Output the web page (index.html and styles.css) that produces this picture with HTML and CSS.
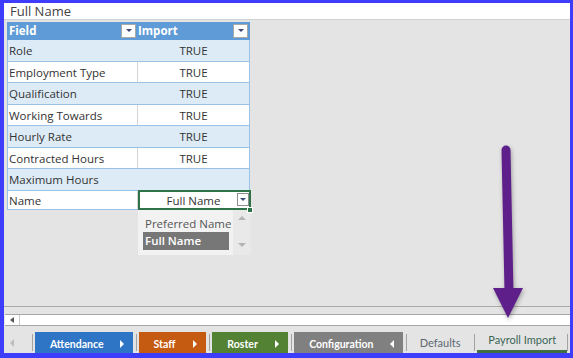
FILE: index.html
```html
<!DOCTYPE html>
<html lang="en">
<head>
    <meta charset="UTF-8">
    <title>Payroll Import</title>
    <link rel="stylesheet" href="styles.css">
</head>
<body>

<div class="window">
    <div class="formula-bar">Full Name</div>

    <div class="sheet">
        <div class="table-wrap">
            <div class="row head">
                <div class="cell">Field<span class="filter-btn"></span></div>
                <div class="cell">Import<span class="filter-btn"></span></div>
            </div>
            <div class="row band">
                <div class="cell">Role</div>
                <div class="cell value">TRUE</div>
            </div>
            <div class="row plain">
                <div class="cell">Employment Type</div>
                <div class="cell value">TRUE</div>
            </div>
            <div class="row band">
                <div class="cell">Qualification</div>
                <div class="cell value">TRUE</div>
            </div>
            <div class="row plain">
                <div class="cell">Working Towards</div>
                <div class="cell value">TRUE</div>
            </div>
            <div class="row band">
                <div class="cell">Hourly Rate</div>
                <div class="cell value">TRUE</div>
            </div>
            <div class="row plain">
                <div class="cell">Contracted Hours</div>
                <div class="cell value">TRUE</div>
            </div>
            <div class="row band">
                <div class="cell">Maximum Hours</div>
                <div class="cell value"></div>
            </div>
            <div class="row plain last">
                <div class="cell">Name</div>
                <div class="cell value selected">Full Name<span class="cell-btn"></span></div>
            </div>

            <div class="dd-list">
                <div class="dd-items">
                    <div class="dd-item">Preferred Name</div>
                    <div class="dd-item active">Full Name</div>
                </div>
                <div class="dd-scroll">
                    <span class="tri-up"></span>
                    <span class="tri-down"></span>
                </div>
            </div>
        </div>
    </div>

    <div class="hscroll">
        <div class="scroll-bar">
            <span class="scroll-btn"><span class="tri-left dark"></span></span>
        </div>
    </div>

    <div class="tabbar">
        <div class="tab-nav"><span class="tri-left light"></span></div>
        <span class="sep first"></span>
        <div class="tab tab-attendance">Attendance<span class="tri-right"></span></div>
        <span class="sep"></span>
        <div class="tab tab-staff">Staff<span class="tri-right"></span></div>
        <span class="sep"></span>
        <div class="tab tab-roster">Roster<span class="tri-right"></span></div>
        <span class="sep"></span>
        <div class="tab tab-config">Configuration<span class="tri-left white"></span></div>
        <span class="sep"></span>
        <div class="tab tab-plain">Defaults</div>
        <span class="sep"></span>
        <div class="tab tab-active">Payroll Import</div>
        <span class="sep first"></span>
    </div>

    <svg class="callout" width="573" height="358" viewBox="0 0 573 358">
        <line x1="506" y1="150" x2="509" y2="292" stroke="#5f1f8b" stroke-width="9" stroke-linecap="round"/>
        <polygon points="493,288 523,288 508,318" fill="#5f1f8b"/>
    </svg>
</div>

</body>
</html>
```

FILE: styles.css
```css
body {
    margin: 0;
    font-family: "Open Sans", sans-serif;
}
.window {
    position: relative;
    width: 573px;
    height: 358px;
    box-sizing: border-box;
    border: solid #3d3dfb;
    border-width: 3px 3px 5px 4px;
    display: flex;
    flex-direction: column;
    background: #e4e4e4;
    overflow: hidden;
}
.formula-bar {
    flex: none;
    height: 16px;
    line-height: 16px;
    padding-left: 6px;
    background: #fff;
    border-bottom: 1px solid #d2d2d2;
    font-size: 13px;
    color: #444;
}
.sheet {
    flex: 1;
    padding: 2px 0 0 3px;
    border-bottom: 1px solid #a9a9a9;
}
.table-wrap {
    position: relative;
    width: 243px;
}
.row {
    display: grid;
    grid-template-columns: 129px 112px;
    box-sizing: border-box;
    border: solid #9bc2e6;
    border-width: 0 1px 1px 1px;
    background: #fff;
}
.row.band {
    height: 22px;
    background: #ddebf7;
}
.row.plain {
    height: 21px;
}
.row.last {
    height: 19px;
}
.row.head {
    height: 18px;
    background: #5f9bd6;
    border-color: #5f9bd6;
    color: #fff;
    font-weight: bold;
}
.cell {
    display: flex;
    align-items: center;
    padding-left: 1px;
    font-size: 11.5px;
    color: #333;
    white-space: nowrap;
}
.head .cell {
    justify-content: space-between;
    padding-right: 1px;
    color: #fff;
}
.cell.value {
    justify-content: center;
    border-left: 1px solid transparent;
    padding-left: 0;
}
.plain .cell.value {
    border-left-color: #d6d6d6;
}
.filter-btn, .cell-btn {
    display: flex;
    align-items: center;
    justify-content: center;
    box-sizing: border-box;
    background: #fff;
    border: 1px solid #a8a8a8;
}
.filter-btn {
    width: 15px;
    height: 14px;
}
.filter-btn::after, .cell-btn::after {
    content: "";
    border-top: 3px solid #3b4a7a;
    border-left: 3px solid transparent;
    border-right: 3px solid transparent;
}
.cell.selected {
    position: relative;
}
.cell.selected::after {
    content: "";
    position: absolute;
    top: -1px;
    right: -2px;
    bottom: -1px;
    left: 0;
    border: 2px solid #2f7448;
}
.cell.selected::before {
    content: "";
    position: absolute;
    right: -4px;
    bottom: -4px;
    width: 4px;
    height: 4px;
    background: #2f7448;
    border: 1px solid #fff;
    z-index: 2;
}
.cell-btn {
    position: absolute;
    right: 0;
    top: 2px;
    width: 12px;
    height: 13px;
    border-color: #8e8e8e;
    z-index: 1;
}
.dd-list {
    position: absolute;
    left: 131px;
    top: 188px;
    width: 113px;
    height: 45px;
    display: flex;
    background: #f2f2f2;
}
.dd-items {
    width: 86px;
    padding: 6px 4px 0 5px;
}
.dd-item {
    height: 16px;
    line-height: 16px;
    padding-left: 2px;
    font-size: 11.5px;
    color: #555;
    white-space: nowrap;
}
.dd-item.active {
    height: 18px;
    line-height: 18px;
    background: #777;
    color: #fff;
    font-weight: 600;
}
.dd-scroll {
    flex: 1;
    display: flex;
    flex-direction: column;
    align-items: center;
    justify-content: space-between;
    padding: 6px 0 8px;
    background: #e9e9e9;
}
.tri-up {
    border-bottom: 4px solid #b4b4b4;
    border-left: 4px solid transparent;
    border-right: 4px solid transparent;
}
.tri-down {
    border-top: 4px solid #b4b4b4;
    border-left: 4px solid transparent;
    border-right: 4px solid transparent;
}
.hscroll {
    flex: none;
    padding: 7px 0 0 1px;
}
.scroll-bar {
    display: flex;
    height: 10px;
    background: #fff;
    border: solid #a6a6a6;
    border-width: 1px 0;
}
.scroll-btn {
    width: 14px;
    display: flex;
    align-items: center;
    justify-content: center;
    border-right: 1px solid #cdcdcd;
}
.tri-left {
    border-top: 3px solid transparent;
    border-bottom: 3px solid transparent;
    border-right: 4px solid #555;
}
.tri-left.light {
    border-top-width: 4px;
    border-bottom-width: 4px;
    border-right-color: #bdbdbd;
}
.tri-left.white {
    border-top-width: 4px;
    border-bottom-width: 4px;
    border-right-color: #fff;
}
.tri-right {
    border-top: 4px solid transparent;
    border-bottom: 4px solid transparent;
    border-left: 4px solid #fff;
}
.tabbar {
    flex: none;
    height: 27px;
    display: flex;
    align-items: flex-end;
    font-family: Lato, "Open Sans", sans-serif;
}
.tab-nav {
    width: 22px;
    height: 21px;
    padding-left: 6px;
    display: flex;
    align-items: center;
}
.sep {
    width: 1px;
    height: 17px;
    margin: 0 2px 2px 3px;
    background: #a3a3a3;
}
.sep.first {
    margin-left: 0;
}
.tab {
    height: 21px;
    box-sizing: border-box;
    display: flex;
    align-items: center;
    justify-content: space-between;
    padding: 2px 9px 0 15px;
    font-size: 10.5px;
    font-weight: bold;
    color: #fff;
    white-space: nowrap;
}
.tab-attendance {
    width: 98px;
    background: #2e75c5;
}
.tab-staff {
    width: 68px;
    background: #c55a11;
}
.tab-roster {
    width: 76px;
    background: #548235;
}
.tab-config {
    width: 109px;
    background: #808080;
}
.tab-plain {
    width: 63px;
    padding: 0;
    justify-content: center;
    font-weight: normal;
    font-size: 11px;
    color: #5d6773;
}
.tab-active {
    width: 90px;
    padding: 0 0 3px;
    justify-content: center;
    border-bottom: 3px solid #3f6f40;
    font-weight: normal;
    font-size: 11px;
    color: #3a6656;
}
.callout {
    position: absolute;
    left: -4px;
    top: -3px;
    pointer-events: none;
    filter: drop-shadow(1px 2px 2px rgba(0, 0, 0, 0.3));
}
```
